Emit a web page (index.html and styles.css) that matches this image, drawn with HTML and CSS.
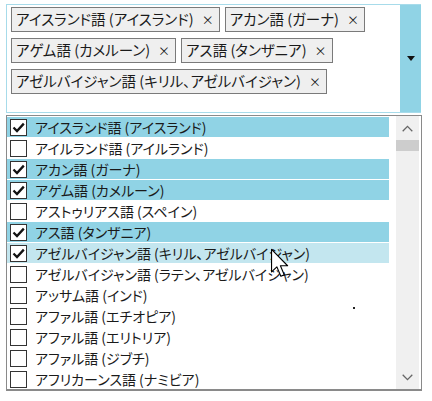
FILE: index.html
```html
<!DOCTYPE html>
<html lang="ja">
<head>
<meta charset="utf-8">
<link rel="stylesheet" href="styles.css">
</head>
<body>
<div class="page">
  <div class="combo">
    <div class="tags">
      <span class="tag">アイスランド語 (アイスランド)<span class="x">×</span></span>
      <span class="tag">アカン語 (ガーナ)<span class="x">×</span></span>
      <span class="tag">アゲム語 (カメルーン)<span class="x">×</span></span>
      <span class="tag">アス語 (タンザニア)<span class="x">×</span></span>
      <span class="tag">アゼルバイジャン語 (キリル、アゼルバイジャン)<span class="x">×</span></span>
    </div>
    <div class="dropbtn">
      <svg width="8" height="5" viewBox="0 0 8 5"><path d="M0 0 H8 L4 5 Z" fill="#111"/></svg>
    </div>
  </div>
  <div class="listbox">
    <ul class="items">
      <li class="item sel"><span class="cb checked"><svg viewBox="0 0 15 15" width="15" height="15"><path d="M2.5 7.5 L6 11 L12.8 3.6" fill="none" stroke="#111" stroke-width="2.3"/></svg></span><span class="lbl">アイスランド語 (アイスランド)</span></li>
      <li class="item"><span class="cb"></span><span class="lbl">アイルランド語 (アイルランド)</span></li>
      <li class="item sel"><span class="cb checked"><svg viewBox="0 0 15 15" width="15" height="15"><path d="M2.5 7.5 L6 11 L12.8 3.6" fill="none" stroke="#111" stroke-width="2.3"/></svg></span><span class="lbl">アカン語 (ガーナ)</span></li>
      <li class="item sel"><span class="cb checked"><svg viewBox="0 0 15 15" width="15" height="15"><path d="M2.5 7.5 L6 11 L12.8 3.6" fill="none" stroke="#111" stroke-width="2.3"/></svg></span><span class="lbl">アゲム語 (カメルーン)</span></li>
      <li class="item"><span class="cb"></span><span class="lbl">アストゥリアス語 (スペイン)</span></li>
      <li class="item sel"><span class="cb checked"><svg viewBox="0 0 15 15" width="15" height="15"><path d="M2.5 7.5 L6 11 L12.8 3.6" fill="none" stroke="#111" stroke-width="2.3"/></svg></span><span class="lbl">アス語 (タンザニア)</span></li>
      <li class="item hover"><span class="cb checked"><svg viewBox="0 0 15 15" width="15" height="15"><path d="M2.5 7.5 L6 11 L12.8 3.6" fill="none" stroke="#111" stroke-width="2.3"/></svg></span><span class="lbl">アゼルバイジャン語 (キリル、アゼルバイジャン)</span></li>
      <li class="item"><span class="cb"></span><span class="lbl">アゼルバイジャン語 (ラテン、アゼルバイジャン)</span></li>
      <li class="item"><span class="cb"></span><span class="lbl">アッサム語 (インド)</span></li>
      <li class="item"><span class="cb"></span><span class="lbl">アファル語 (エチオピア)</span></li>
      <li class="item"><span class="cb"></span><span class="lbl">アファル語 (エリトリア)</span></li>
      <li class="item"><span class="cb"></span><span class="lbl">アファル語 (ジブチ)</span></li>
      <li class="item"><span class="cb"></span><span class="lbl">アフリカーンス語 (ナミビア)</span></li>
    </ul>
    <div class="scrollbar">
      <div class="arrow"><svg width="11" height="7" viewBox="0 0 11 7"><path d="M0.7 6.2 L5.5 1.4 L10.3 6.2" fill="none" stroke="#666" stroke-width="1.3"/></svg></div>
      <div class="thumb"></div>
      <div class="track"></div>
      <div class="arrow"><svg width="11" height="7" viewBox="0 0 11 7"><path d="M0.7 0.8 L5.5 5.6 L10.3 0.8" fill="none" stroke="#666" stroke-width="1.3"/></svg></div>
    </div>
  </div>
  <svg class="cursor" width="20" height="31" viewBox="0 0 14 22"><path d="M1 1 L1 17 L4.8 13.4 L7.6 20 L10 19 L7.3 12.6 L12.4 12.6 Z" fill="#fff" stroke="#000" stroke-width="0.8" stroke-linejoin="round"/></svg>
  <span class="dot"></span>
</div>
</body>
</html>
```

FILE: styles.css
```css
html, body {
  margin: 0;
  padding: 0;
  background: #fff;
}
.page {
  position: relative;
  width: 432px;
  height: 401px;
  padding: 4px 0 0 6px;
  box-sizing: border-box;
  font-family: "Noto Sans CJK JP", "Noto Sans", sans-serif;
  font-size: 14px;
  font-feature-settings: "palt";
  color: #1a1a1a;
}
.combo {
  display: flex;
  width: 415px;
  height: 109px;
  box-sizing: border-box;
  border: 1px solid #a7dbea;
  border-right: none;
  background: #fff;
}
.tags {
  flex: 1;
  display: flex;
  flex-wrap: wrap;
  align-content: flex-start;
  gap: 6px 5px;
  padding: 2px 4px;
}
.tag {
  display: inline-flex;
  align-items: center;
  height: 25px;
  box-sizing: border-box;
  padding: 0 5px 0 4px;
  border: 1px solid #7a7a7a;
  background: #efefef;
  line-height: 1;
  font-size: 14.5px;
  white-space: nowrap;
}
.x {
  margin-left: 8px;
  font-size: 12px;
}
.dropbtn {
  width: 21px;
  background: #90d3e5;
  display: flex;
  align-items: center;
  justify-content: center;
}
.listbox {
  display: flex;
  margin-top: 2px;
  width: 416px;
  height: 276px;
  box-sizing: border-box;
  border: 1px solid #8a8a8a;
  border-bottom: 2px solid #8a8a8a;
  overflow: hidden;
}
.items {
  list-style: none;
  margin: 0;
  padding: 1px 7px 0 0;
  flex: 1;
}
.item {
  display: flex;
  align-items: center;
  height: 20px;
  margin-bottom: 1px;
  white-space: nowrap;
  line-height: 1;
}
.item.sel {
  background: #90d3e5;
}
.item.hover {
  background: #c3e6ef;
}
.cb {
  width: 17px;
  height: 17px;
  box-sizing: border-box;
  border: 1px solid #333;
  background: #fff;
  margin: 0 8px 0 3px;
  display: flex;
  align-items: center;
  justify-content: center;
  flex: none;
}
.scrollbar {
  width: 23px;
  margin: 0 2px 0 0;
  background: #f0f0f0;
  display: flex;
  flex-direction: column;
}
.arrow {
  height: 24px;
  display: flex;
  align-items: center;
  justify-content: center;
}
.thumb {
  height: 11px;
  background: #cdcdcd;
}
.track {
  flex: 1;
}
.cursor {
  position: absolute;
  left: 270px;
  top: 248px;
}
.dot {
  position: absolute;
  left: 353px;
  top: 307px;
  width: 2px;
  height: 2px;
  background: #222;
}
```
